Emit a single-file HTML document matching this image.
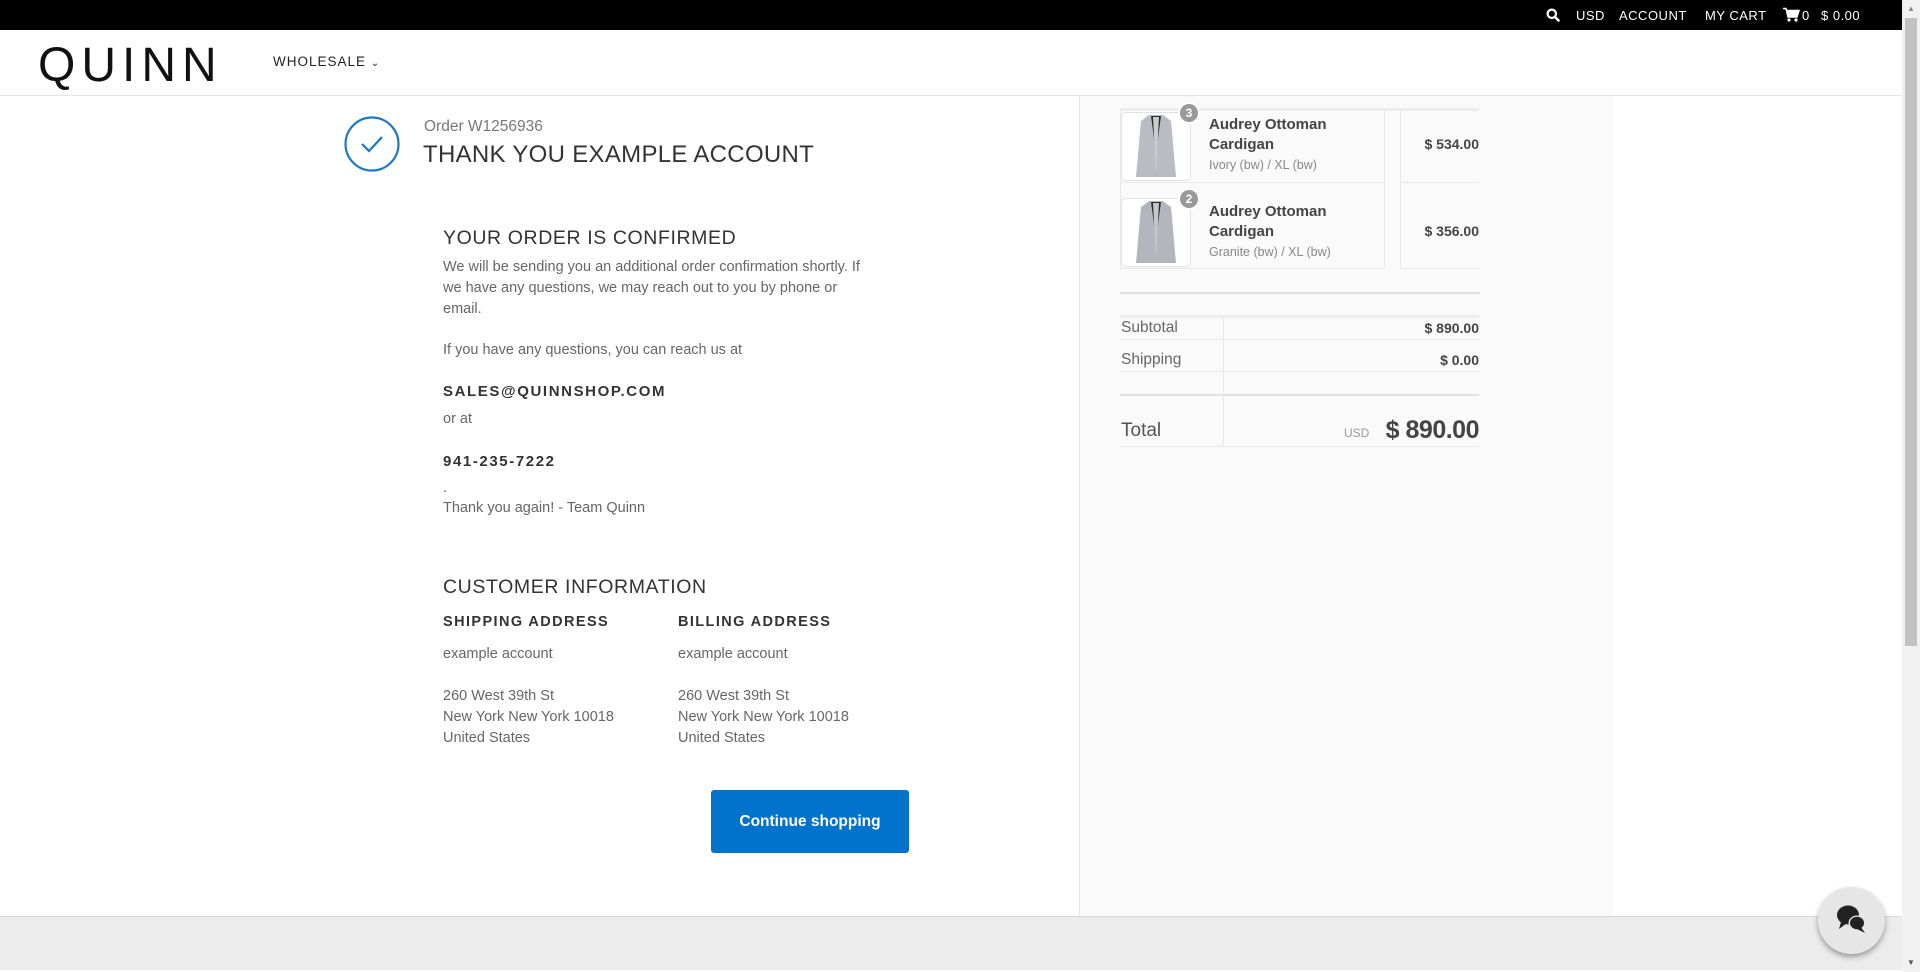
<!DOCTYPE html>
<html><head><meta charset="utf-8"><style>
*{margin:0;padding:0;box-sizing:border-box}
body{width:1920px;height:972px;overflow:hidden;background:#fff;font-family:"Liberation Sans",sans-serif;color:#555;position:relative}
.abs{position:absolute;white-space:nowrap}
#top{position:absolute;left:0;top:0;width:1902px;height:30px;background:#000;color:#fff;font-size:13px;letter-spacing:.5px}
#top span{position:absolute;top:8px}
#hdr{position:absolute;left:0;top:30px;width:1902px;height:66px;border-bottom:1px solid #e5e5e5}
#right{position:absolute;left:1079px;top:96px;width:534px;height:820px;background:#fafafa;border-left:1px solid #e6e6e6}
#foot{position:absolute;left:0;top:916px;width:1902px;height:54px;background:#ececec;border-top:1px solid #d8d8d8}
#sb{position:absolute;left:1902px;top:0;width:18px;height:972px;background:#f1f1f1}
.b{font-weight:bold;color:#333;letter-spacing:1.6px}
.t{font-size:14.5px;color:#666}
h2{font-weight:normal;color:#333;font-size:19.5px;letter-spacing:.6px;position:absolute;white-space:nowrap}
.nm{font-weight:bold;color:#444;font-size:15px;line-height:20px}
.var{font-size:12.5px;color:#888}
.pr{font-weight:bold;color:#444;font-size:14px}
.ln{position:absolute;background:#e8e8e8}
</style></head><body>
<div id="top">
<svg style="position:absolute;left:1546px;top:8px" width="14" height="14" viewBox="0 0 14 14"><circle cx="5.8" cy="5.8" r="4.2" fill="none" stroke="#fff" stroke-width="2.2"/><path d="M9 9 L12.5 12.5" stroke="#fff" stroke-width="2.6" stroke-linecap="round"/></svg>
<span style="left:1576px">USD</span><span style="left:1619px">ACCOUNT</span><span style="left:1705px">MY CART</span>
<svg style="position:absolute;left:1783px;top:7px" width="17" height="15" viewBox="0 0 17 15"><path d="M0 1.5H3L5 10H14L16 3.5H4" fill="#fff" stroke="#fff" stroke-width="1.5"/><circle cx="6" cy="13" r="1.6" fill="#fff"/><circle cx="13" cy="13" r="1.6" fill="#fff"/></svg>
<span style="left:1802px">0</span><span style="left:1821px">$ 0.00</span>
</div>
<div id="hdr">
<div class="abs" style="left:38px;top:8px;font-size:48px;letter-spacing:6px;color:#111;font-weight:normal">QUINN</div>
<div class="abs" style="left:273px;top:24px;font-size:13.5px;color:#222;letter-spacing:1px">WHOLESALE <span style="font-size:10px">&#8964;</span></div>
</div>
<div id="right"></div>
<div id="foot"></div>
<div id="sb"><div style="position:absolute;left:3px;top:18px;width:12px;height:628px;background:#c1c1c1"></div><div style="position:absolute;left:5px;top:4px;font-size:8px;color:#888">&#9650;</div><div style="position:absolute;left:5px;top:958px;font-size:8px;color:#555">&#9660;</div></div>

<svg class="abs" style="left:343px;top:115px" width="58" height="58" viewBox="0 0 58 58"><circle cx="29" cy="29" r="26.5" fill="none" stroke="#1a78c8" stroke-width="2.2"/><path d="M19 29 L26 36 L39 22" fill="none" stroke="#1a78c8" stroke-width="2.2"/></svg>
<div class="abs" style="left:424px;top:118px;font-size:15.5px;color:#777">Order W1256936</div>
<div class="abs" style="left:423px;top:141px;font-size:24px;color:#333;letter-spacing:.3px">THANK YOU EXAMPLE ACCOUNT</div>

<h2 style="left:443px;top:227px">YOUR ORDER IS CONFIRMED</h2>
<div class="abs t" style="left:443px;top:257px;line-height:21px">We will be sending you an additional order confirmation shortly. If<br>we have any questions, we may reach out to you by phone or<br>email.</div>
<div class="abs t" style="left:443px;top:342px">If you have any questions, you can reach us at</div>
<div class="abs b" style="left:443px;top:383px;font-size:15px">SALES@QUINNSHOP.COM</div>
<div class="abs t" style="left:443px;top:411px">or at</div>
<div class="abs b" style="left:443px;top:453px;font-size:15px">941-235-7222</div>
<div class="abs t" style="left:443px;top:480px">.</div>
<div class="abs t" style="left:443px;top:500px">Thank you again! - Team Quinn</div>

<h2 style="left:443px;top:576px">CUSTOMER INFORMATION</h2>
<div class="abs b" style="left:443px;top:614px;font-size:14.5px;letter-spacing:1.4px">SHIPPING ADDRESS</div>
<div class="abs b" style="left:678px;top:614px;font-size:14.5px;letter-spacing:1.4px">BILLING ADDRESS</div>
<div class="abs t" style="left:443px;top:644px;line-height:21px">example account<br><br>260 West 39th St<br>New York New York 10018<br>United States</div>
<div class="abs t" style="left:678px;top:644px;line-height:21px">example account<br><br>260 West 39th St<br>New York New York 10018<br>United States</div>

<div class="abs" style="left:711px;top:790px;width:198px;height:63px;background:#0273cc;border-radius:3px;color:#fff;font-weight:bold;font-size:15.5px;text-align:center;line-height:63px">Continue shopping</div>

<div class="ln" style="left:1120px;top:108px;width:359px;height:3px;background:#eee"></div>
<div class="ln" style="left:1120px;top:182px;width:264px;height:1px"></div>
<div class="ln" style="left:1400px;top:182px;width:79px;height:1px"></div>
<div class="ln" style="left:1120px;top:268px;width:264px;height:1px"></div>
<div class="ln" style="left:1400px;top:268px;width:79px;height:1px"></div>
<div class="ln" style="left:1384px;top:110px;width:1px;height:158px"></div>
<div class="ln" style="left:1400px;top:110px;width:1px;height:158px"></div>
<div class="ln" style="left:1120px;top:110px;width:1px;height:158px"></div>

<div class="abs" style="left:1121px;top:112px;width:70px;height:69px;background:#fff;border:1px solid #e2e2e2;border-radius:5px"></div>
<svg class="abs" style="left:1131px;top:113px" width="50" height="68" viewBox="0 0 50 68"><path d="M18 2 L32 2 L40 8 L45 64 L5 64 L10 8Z" fill="#b9bcc2"/><path d="M20 3 L25 40 L30 3" fill="#2b2b2b"/><path d="M22 4 L25 60 L28 4" fill="#c9ccd1"/></svg>
<div class="abs" style="left:1178px;top:102px;width:22px;height:22px;border-radius:50%;background:#999;border:2px solid #fff;color:#fff;font-size:12px;font-weight:bold;text-align:center;line-height:18px">3</div>
<div class="abs nm" style="left:1209px;top:115px">Audrey Ottoman<br>Cardigan</div>
<div class="abs var" style="left:1209px;top:158px">Ivory (bw) / XL (bw)</div>
<div class="abs pr" style="left:1400px;width:79px;text-align:right;top:136px">$ 534.00</div>

<div class="abs" style="left:1121px;top:198px;width:70px;height:69px;background:#fff;border:1px solid #e2e2e2;border-radius:5px"></div>
<svg class="abs" style="left:1131px;top:199px" width="50" height="68" viewBox="0 0 50 68"><path d="M18 2 L32 2 L40 8 L45 64 L5 64 L10 8Z" fill="#b3b6bc"/><path d="M20 3 L25 40 L30 3" fill="#2b2b2b"/><path d="M22 4 L25 60 L28 4" fill="#c4c7cc"/></svg>
<div class="abs" style="left:1178px;top:188px;width:22px;height:22px;border-radius:50%;background:#999;border:2px solid #fff;color:#fff;font-size:12px;font-weight:bold;text-align:center;line-height:18px">2</div>
<div class="abs nm" style="left:1209px;top:202px">Audrey Ottoman<br>Cardigan</div>
<div class="abs var" style="left:1209px;top:245px">Granite (bw) / XL (bw)</div>
<div class="abs pr" style="left:1400px;width:79px;text-align:right;top:223px">$ 356.00</div>

<div class="ln" style="left:1120px;top:292px;width:360px;height:2px;background:#e2e2e2"></div>

<div class="ln" style="left:1120px;top:315px;width:359px;height:3px;background:#eee"></div>
<div class="ln" style="left:1120px;top:339px;width:359px;height:1px"></div>
<div class="ln" style="left:1120px;top:371px;width:359px;height:1px"></div>
<div class="ln" style="left:1120px;top:394px;width:359px;height:2px;background:#e2e2e2"></div>
<div class="ln" style="left:1120px;top:446px;width:359px;height:1px"></div>
<div class="ln" style="left:1223px;top:318px;width:1px;height:128px"></div>
<div class="abs" style="left:1121px;top:319px;font-size:15.5px;color:#666">Subtotal</div>
<div class="abs pr" style="left:1300px;width:179px;text-align:right;top:320px">$ 890.00</div>
<div class="abs" style="left:1121px;top:351px;font-size:15.5px;color:#666">Shipping</div>
<div class="abs pr" style="left:1300px;width:179px;text-align:right;top:352px">$ 0.00</div>
<div class="abs" style="left:1121px;top:420px;font-size:19px;color:#555">Total</div>
<div class="abs" style="left:1344px;top:426px;font-size:12px;color:#999">USD</div>
<div class="abs" style="left:1370px;top:416px;width:109px;text-align:right;font-size:25px;font-weight:bold;color:#444;letter-spacing:-.5px">$ 890.00</div>

<div class="abs" style="left:1818px;top:887px;width:67px;height:67px;border-radius:50%;background:#e6e6e6;box-shadow:0 3px 6px rgba(0,0,0,.35)"></div>
<svg class="abs" style="left:1834px;top:902px" width="36" height="36" viewBox="0 0 36 36"><ellipse cx="14" cy="13" rx="11" ry="9.5" fill="#222"/><path d="M7 20 L5 27 L13 21Z" fill="#222"/><ellipse cx="23" cy="21" rx="8.5" ry="7.5" fill="#e6e6e6"/><ellipse cx="23" cy="21" rx="7" ry="6.2" fill="#222"/><path d="M27 25 L31 31 L23 27Z" fill="#222"/></svg>
</body></html>
